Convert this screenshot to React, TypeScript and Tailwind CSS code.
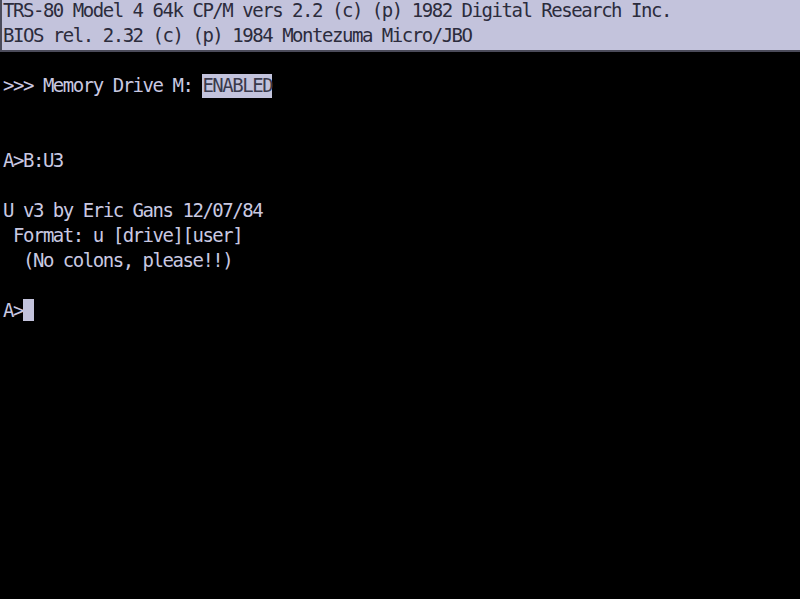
import React from "react";

export default function App() {
  return (
    <div className="w-[800px] h-[599px] overflow-hidden bg-black font-['DejaVu_Sans_Mono','Liberation_Mono',monospace] text-[19px] leading-[21px] tracking-[-1.47px] text-[#c9c9e2]">
      {/* status header */}
      <div className="h-[52px] border-l-2 border-b-2 border-[#4b4b5a] bg-[#c3c3dc] pl-[1px] text-[#2c2c3c]">
        <div className="h-[25px] whitespace-pre">TRS-80 Model 4 64k CP/M vers 2.2 (c) (p) 1982 Digital Research Inc.</div>
        <div className="h-[25px] whitespace-pre">BIOS rel. 2.32 (c) (p) 1984 Montezuma Micro/JBO</div>
      </div>

      <div className="-mt-[2px] pl-[3px]">
        <div className="h-[25px]" />
        <div className="flex h-[25px] items-start whitespace-pre">
          <span>{">>> Memory Drive M: "}</span>
          <span className="-mt-[1px] inline-block h-[24px] bg-[#c3c3dc] pt-[1px] text-[#3a3a4c]">ENABLED</span>
        </div>
        <div className="h-[25px]" />
        <div className="h-[25px]" />
        <div className="h-[25px] whitespace-pre">A&gt;B:U3</div>
        <div className="h-[25px]" />
        <div className="h-[25px] whitespace-pre">U v3 by Eric Gans 12/07/84</div>
        <div className="h-[25px] whitespace-pre"> Format: u [drive][user]</div>
        <div className="h-[25px] whitespace-pre">  (No colons, please!!)</div>
        <div className="h-[25px]" />
        <div className="flex h-[25px] items-start whitespace-pre">
          <span>A&gt;</span>
          <span className="-mt-[1px] inline-block h-[22px] w-[11px] bg-[#c3c3dc]" />
        </div>
      </div>
    </div>
  );
}
